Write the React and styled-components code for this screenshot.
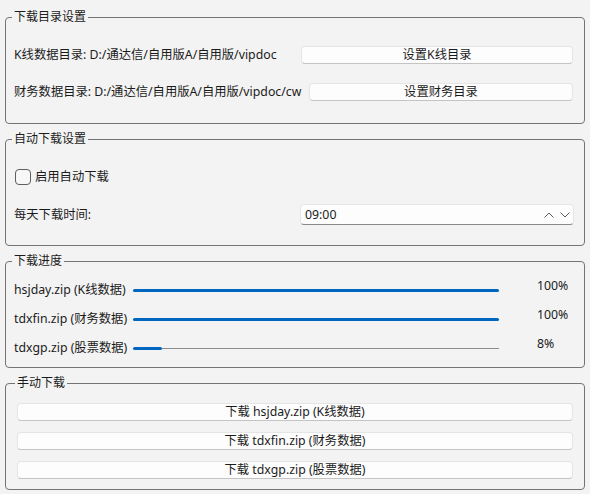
import React from "react";
import styled, { createGlobalStyle } from "styled-components";

const GlobalStyle = createGlobalStyle`
  html, body { margin: 0; padding: 0; background: #f3f3f3; }
  body {
    font-family: "Segoe UI", "Noto Sans", "Noto Sans CJK SC", sans-serif;
    font-size: 12.3px;
    color: #1b1b1b;
  }
  * { box-sizing: border-box; }
`;

const Window = styled.div`
  width: 590px;
  height: 494px;
  padding: 10px 5px 4px 5px;
  display: flex;
  flex-direction: column;
  gap: 8px;
  background: #f3f3f3;
`;

const Group = styled.fieldset`
  margin: 0;
  min-width: 0;
  border: 1px solid #747474;
  border-radius: 4px;
  padding: ${(p) => p.$pad};
  display: flex;
  flex-direction: column;
  gap: ${(p) => p.$gap}px;
`;

const Title = styled.legend`
  font-size: 12px;
  line-height: 14px;
  padding: 0 2px;
  margin-left: -2px;
  color: #1b1b1b;
`;

const Row = styled.div`
  display: flex;
  align-items: center;
  height: ${(p) => p.$h || 18}px;
  gap: ${(p) => p.$gap || 0}px;
`;

const Label = styled.span`
  flex: 0 0 ${(p) => p.$w}px;
  min-width: 0;
  overflow: visible;
  white-space: nowrap;
  line-height: 18px;
`;

const PushButton = styled.button`
  flex: 1;
  height: 18px;
  margin: 0;
  padding: 0;
  background: #fdfdfd;
  border: 1px solid #e5e5e5;
  border-bottom-color: #c4c4c4;
  border-radius: 4px;
  font: inherit;
  line-height: 16px;
  color: #1b1b1b;
  text-align: center;
  white-space: nowrap;
`;

const CheckBox = styled.span`
  width: 16px;
  height: 16px;
  margin-left: 1px;
  border: 1px solid #5e5e5e;
  border-radius: 4px;
  background: #f7f7f7;
  flex-shrink: 0;
`;

const CheckLabel = styled.span`
  margin-left: 4px;
  line-height: 18px;
`;

const SpinBox = styled.div`
  flex: 1;
  height: 21px;
  display: flex;
  align-items: center;
  padding: 0 3px 0 4px;
  background: #fdfdfd;
  border: 1px solid #e5e5e5;
  border-bottom-color: #8a8a8a;
  border-radius: 4px;
`;

const SpinText = styled.span`
  flex: 1;
  line-height: 19px;
`;

const Arrows = styled.span`
  display: flex;
  align-items: center;
  gap: 6px;
`;

const Track = styled.div`
  flex: 1;
  height: 3px;
  display: flex;
  align-items: center;
  background: linear-gradient(#8c8c8c, #8c8c8c) center / 100% 1px no-repeat;
`;

const Fill = styled.div`
  height: 3px;
  border-radius: 2px;
  background: #0067c0;
`;

const Percent = styled.span`
  flex: 0 0 36px;
  margin-left: 38px;
  margin-bottom: 9px;
  line-height: 18px;
  white-space: nowrap;
`;

const Chevron = ({ up }) => (
  <svg width="10" height="6" viewBox="0 0 10 6">
    <polyline
      points={up ? "0.5,5.5 5,1 9.5,5.5" : "0.5,0.5 5,5 9.5,0.5"}
      fill="none"
      stroke="#5a5a5a"
      strokeWidth="1"
    />
  </svg>
);

const progress = [
  { name: "hsjday.zip (K线数据)", value: 100 },
  { name: "tdxfin.zip (财务数据)", value: 100 },
  { name: "tdxgp.zip (股票数据)", value: 8 },
];

export default function App() {
  return (
    <>
      <GlobalStyle />
      <Window>
        <Group $pad="22px 11px 22px 8px" $gap={19}>
          <Title>下载目录设置</Title>
          <Row $gap={8}>
            <Label $w={279}>K线数据目录: D:/通达信/自用版A/自用版/vipdoc</Label>
            <PushButton>设置K线目录</PushButton>
          </Row>
          <Row $gap={8}>
            <Label $w={287}>财务数据目录: D:/通达信/自用版A/自用版/vipdoc/cw</Label>
            <PushButton>设置财务目录</PushButton>
          </Row>
        </Group>

        <Group $pad="22px 10px 20px 8px" $gap={18}>
          <Title>自动下载设置</Title>
          <Row>
            <CheckBox />
            <CheckLabel>启用自动下载</CheckLabel>
          </Row>
          <Row $h={21}>
            <Label $w={286}>每天下载时间:</Label>
            <SpinBox>
              <SpinText>09:00</SpinText>
              <Arrows>
                <Chevron up />
                <Chevron />
              </Arrows>
            </SpinBox>
          </Row>
        </Group>

        <Group $pad="13px 11px 10px 8px" $gap={11}>
          <Title>下载进度</Title>
          {progress.map((p) => (
            <Row key={p.name}>
              <Label $w={119}>{p.name}</Label>
              <Track>
                <Fill style={{ width: `${p.value}%` }} />
              </Track>
              <Percent>{p.value}%</Percent>
            </Row>
          ))}
        </Group>

        <Group $pad="13px 11px 10px 11px" $gap={11}>
          <Title>手动下载</Title>
          <PushButton>下载 hsjday.zip (K线数据)</PushButton>
          <PushButton>下载 tdxfin.zip (财务数据)</PushButton>
          <PushButton>下载 tdxgp.zip (股票数据)</PushButton>
        </Group>
      </Window>
    </>
  );
}
